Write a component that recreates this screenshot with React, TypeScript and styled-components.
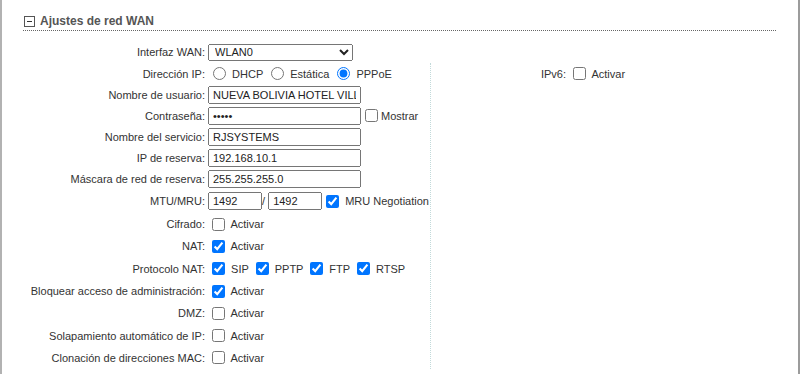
import styled, { createGlobalStyle } from 'styled-components';

const GlobalStyle = createGlobalStyle`
  body {
    margin: 0;
    background: #ffffff;
    font-family: 'Liberation Sans', Arial, sans-serif;
    font-size: 11px;
    color: #333333;
  }
`;

const Frame = styled.div`
  min-height: 374px;
  box-sizing: border-box;
  border-left: 2px solid #b2b2b2;
  border-right: 2px solid #9c9c9c;
  padding: 12px 22px 0 21px;
`;

const SectionTitle = styled.div`
  display: flex;
  align-items: center;
  gap: 5px;
  height: 18px;
  padding-left: 1px;
  border-bottom: 1px dotted #666666;
  color: #555555;
  font-weight: bold;
  font-size: 12px;
`;

const Toggle = styled.svg`
  flex: none;
  display: block;
`;

const Content = styled.div`
  padding-top: 10px;
`;

const Columns = styled.div`
  display: flex;
`;

const LeftCol = styled.div`
  width: 407px;
  flex: none;
`;

const RightCol = styled.div`
  flex: 1;
  border-left: 1px dotted #c2dada;
`;

const Row = styled.div<{ $h: number }>`
  display: flex;
  align-items: center;
  height: ${(p) => p.$h}px;
  white-space: nowrap;
`;

const Label = styled.div<{ $w: number }>`
  flex: none;
  width: ${(p) => p.$w}px;
  box-sizing: border-box;
  padding-right: 3px;
  text-align: right;
`;

const Field = styled.div`
  display: flex;
  align-items: center;
  white-space: pre;
`;

const Select = styled.select`
  width: 145px;
  height: 17px;
  font-family: 'Liberation Sans', Arial, sans-serif;
  font-size: 11px;
  color: #222;
  padding: 0 0 0 2px;
`;

const TextInput = styled.input<{ $w?: number }>`
  width: ${(p) => p.$w ?? 153}px;
  height: 18px;
  box-sizing: border-box;
  margin: 0;
  font-family: 'Liberation Sans', Arial, sans-serif;
  font-size: 11px;
  color: #222;
  padding: 1px 3px;
`;

const Check = styled.input`
  margin: 3px 3px 3px 4px;
  width: 13px;
  height: 13px;
`;

const Radio = styled.input`
  margin: 0 3px 0 5px;
  width: 13px;
  height: 13px;
`;

const MinusBox = () => (
  <Toggle width="11" height="11" viewBox="0 0 11 11">
    <rect x="0.5" y="0.5" width="10" height="10" fill="#fff" stroke="#555" />
    <rect x="3" y="5" width="5" height="1" fill="#333" />
  </Toggle>
);

const CheckField = ({ on, text }: { on?: boolean; text: string }) => (
  <>
    <Check type="checkbox" defaultChecked={on} />
    {' ' + text}
  </>
);

const L = 185;

const textRows = [
  { label: 'Nombre de usuario:', value: 'NUEVA BOLIVIA HOTEL VILLAMONTES' },
  { label: 'Contraseña:', value: '', password: true },
  { label: 'Nombre del servicio:', value: 'RJSYSTEMS' },
  { label: 'IP de reserva:', value: '192.168.10.1' },
  { label: 'Máscara de red de reserva:', value: '255.255.255.0' },
];

const enableRows = [
  { label: 'Cifrado:', on: false },
  { label: 'NAT:', on: true },
];

const lowerRows = [
  { label: 'Bloquear acceso de administración:', on: true },
  { label: 'DMZ:', on: false },
  { label: 'Solapamiento automático de IP:', on: false },
  { label: 'Clonación de direcciones MAC:', on: false },
];

export default function App() {
  return (
    <>
      <GlobalStyle />
      <Frame>
        <SectionTitle>
          <MinusBox />
          Ajustes de red WAN
        </SectionTitle>
        <Content>
          <Row $h={22}>
            <Label $w={L}>Interfaz WAN:</Label>
            <Field>
              <Select defaultValue="WLAN0">
                <option>WLAN0</option>
                <option>WAN</option>
              </Select>
            </Field>
          </Row>
          <Columns>
            <LeftCol>
              <Row $h={21}>
                <Label $w={L}>Dirección IP:</Label>
                <Field>
                  <Radio type="radio" name="ip" />
                  {' DHCP '}
                  <Radio type="radio" name="ip" />
                  {' Estática '}
                  <Radio type="radio" name="ip" defaultChecked />
                  {' PPPoE'}
                </Field>
              </Row>
              {textRows.map((r) => (
                <Row $h={21} key={r.label}>
                  <Label $w={L}>{r.label}</Label>
                  <Field>
                    {r.password ? (
                      <>
                        <TextInput type="password" defaultValue="12345" />
                        <Check type="checkbox" style={{ marginLeft: 4 }} />
                        Mostrar
                      </>
                    ) : (
                      <TextInput type="text" defaultValue={r.value} />
                    )}
                  </Field>
                </Row>
              ))}
              <Row $h={24}>
                <Label $w={L}>MTU/MRU:</Label>
                <Field>
                  <TextInput $w={54} type="text" defaultValue="1492" />
                  {'/ '}
                  <TextInput $w={54} type="text" defaultValue="1492" />
                  {' '}
                  <CheckField on text="MRU Negotiation" />
                </Field>
              </Row>
              {enableRows.map((r) => (
                <Row $h={22.3} key={r.label}>
                  <Label $w={L}>{r.label}</Label>
                  <Field>
                    <CheckField on={r.on} text="Activar" />
                  </Field>
                </Row>
              ))}
              <Row $h={22.3}>
                <Label $w={L}>Protocolo NAT:</Label>
                <Field>
                  <CheckField on text="SIP " />
                  <CheckField on text="PPTP " />
                  <CheckField on text="FTP " />
                  <CheckField on text="RTSP" />
                </Field>
              </Row>
              {lowerRows.map((r) => (
                <Row $h={22.3} key={r.label}>
                  <Label $w={L}>{r.label}</Label>
                  <Field>
                    <CheckField on={r.on} text="Activar" />
                  </Field>
                </Row>
              ))}
            </LeftCol>
            <RightCol>
              <Row $h={21}>
                <Label $w={138}>IPv6:</Label>
                <Field>
                  <CheckField text="Activar" />
                </Field>
              </Row>
            </RightCol>
          </Columns>
        </Content>
      </Frame>
    </>
  );
}
